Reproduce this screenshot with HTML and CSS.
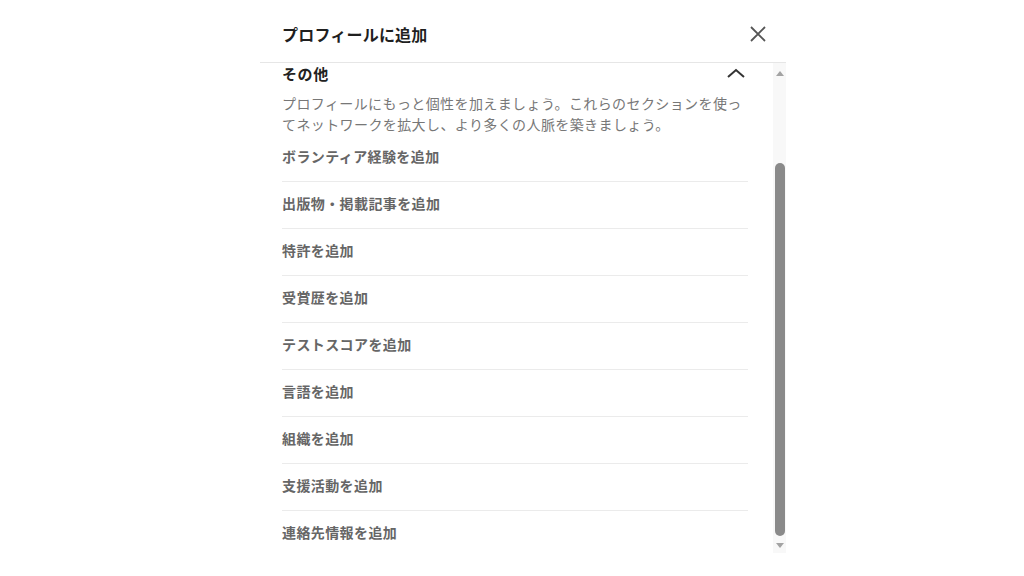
FILE: index.html
```html
<!DOCTYPE html>
<html lang="ja">
<head>
    <meta charset="UTF-8">
    <meta name="viewport" content="width=device-width, initial-scale=1.0">
    <title>プロフィールに追加</title>
    <link rel="stylesheet" href="styles.css">
</head>
<body>
    <div class="modal">
        <div class="modal-header">
            <h2 class="modal-title">プロフィールに追加</h2>
            <button class="close-button" aria-label="閉じる">
                <svg width="24" height="24" viewBox="0 0 24 24">
                    <path d="M5 5 L19 19 M19 5 L5 19" stroke="#555" stroke-width="1.8" fill="none"/>
                </svg>
            </button>
        </div>

        <div class="modal-body">
            <div class="content">
                <div class="section-head">
                    <span class="section-title">その他</span>
                    <svg width="24" height="16" viewBox="0 0 24 16">
                        <path d="M4 12 L12 5 L20 12" stroke="#333" stroke-width="2" fill="none"/>
                    </svg>
                </div>
                <p class="section-text">プロフィールにもっと個性を加えましょう。これらのセクションを使ってネットワークを拡大し、より多くの人脈を築きましょう。</p>
                <ul class="add-list">
                    <li>ボランティア経験を追加</li>
                    <li>出版物・掲載記事を追加</li>
                    <li>特許を追加</li>
                    <li>受賞歴を追加</li>
                    <li>テストスコアを追加</li>
                    <li>言語を追加</li>
                    <li>組織を追加</li>
                    <li>支援活動を追加</li>
                    <li>連絡先情報を追加</li>
                </ul>
            </div>
            <div class="scrollbar">
                <span class="arrow-up"></span>
                <span class="thumb"></span>
                <span class="arrow-down"></span>
            </div>
        </div>
    </div>
</body>
</html>
```

FILE: styles.css
```css
body {
    margin: 0;
    padding: 0;
    background: #ffffff;
    font-family: "Noto Sans CJK JP", "Noto Sans", sans-serif;
    color: #191919;
}

.modal {
    width: 526px;
    margin-left: 260px;
    height: 576px;
    background: #ffffff;
}

.modal-header {
    box-sizing: border-box;
    height: 63px;
    padding: 6px 16px 0 22px;
    display: flex;
    align-items: center;
    justify-content: space-between;
    border-bottom: 1px solid #e6e6e6;
}

.modal-title {
    margin: 0;
    font-size: 16px;
    font-weight: 600;
    color: #1f1f1f;
    letter-spacing: 0.2px;
}

.close-button {
    border: none;
    background: none;
    padding: 0;
    width: 24px;
    height: 24px;
    display: flex;
    cursor: pointer;
}

.modal-body {
    display: flex;
    height: 490px;
}

.content {
    flex: 1;
    padding: 0 25px 0 22px;
    overflow: hidden;
}

.section-head {
    height: 20px;
    display: flex;
    align-items: center;
    justify-content: space-between;
}

.section-title {
    font-size: 15px;
    font-weight: 700;
    color: #222;
    letter-spacing: 0.6px;
}

.section-head svg {
    margin-right: 0;
}

.section-text {
    margin: 10px 0 0;
    font-size: 14px;
    line-height: 21px;
    letter-spacing: 0.4px;
    color: #777;
}

.add-list {
    list-style: none;
    margin: 0;
    padding: 0;
}

.add-list li {
    padding: 11px 0 14px;
    line-height: 21px;
    font-size: 14px;
    font-weight: 600;
    letter-spacing: 0.4px;
    color: #666;
    border-bottom: 1px solid #ebebeb;
}

.add-list li:last-child {
    border-bottom: none;
}

.scrollbar {
    width: 13px;
    background: #f8f8f8;
    display: flex;
    flex-direction: column;
    align-items: center;
    padding-top: 8px;
    box-sizing: border-box;
}

.arrow-up {
    width: 0;
    height: 0;
    border-left: 4px solid transparent;
    border-right: 4px solid transparent;
    border-bottom: 5px solid #a3a3a3;
}

.thumb {
    margin-top: 87px;
    width: 10px;
    height: 373px;
    border-radius: 5px;
    background: #8a8a8a;
}

.arrow-down {
    margin-top: 7px;
    width: 0;
    height: 0;
    border-left: 4px solid transparent;
    border-right: 4px solid transparent;
    border-top: 5px solid #a3a3a3;
}
```
